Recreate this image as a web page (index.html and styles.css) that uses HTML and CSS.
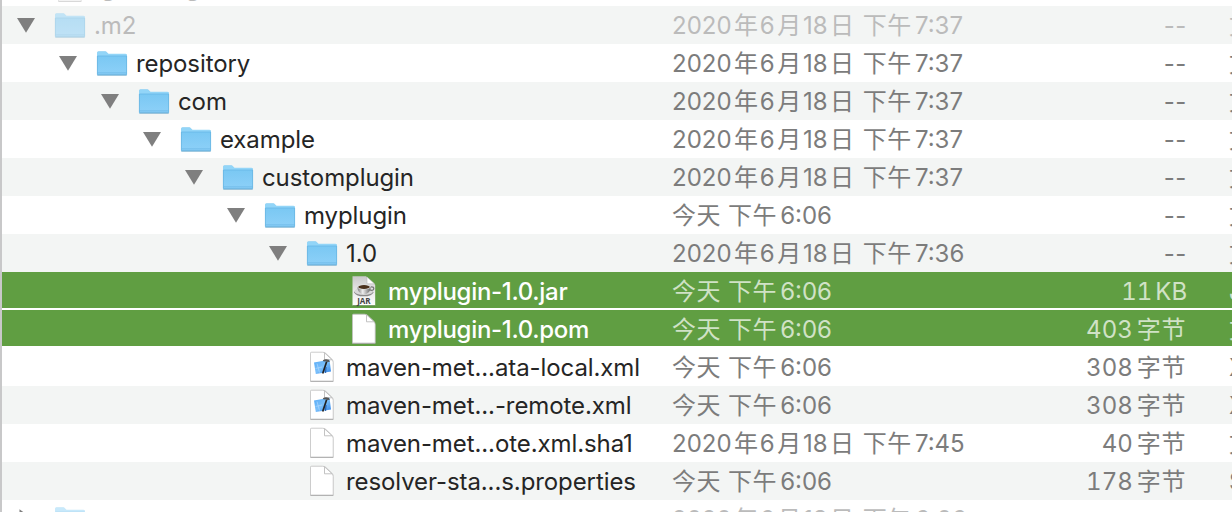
FILE: index.html
```html
<!DOCTYPE html>
<html lang="zh-CN">
<head>
<meta charset="utf-8">
<title>.m2</title>
<link rel="stylesheet" href="styles.css">
</head>
<body>
<svg class="defs" aria-hidden="true">
  <defs>
    <linearGradient id="gFolder" x1="0" y1="0" x2="0" y2="1"><stop offset="0" stop-color="#7ac8f3"/><stop offset="1" stop-color="#8dd0f8"/></linearGradient>
    <linearGradient id="gJar" x1="0" y1="0" x2="0" y2="1"><stop offset="0" stop-color="#c9c9c9"/><stop offset=".6" stop-color="#ededed"/><stop offset="1" stop-color="#fff"/></linearGradient>
    <linearGradient id="gBlue" x1="0" y1="0" x2="1" y2="1"><stop offset="0" stop-color="#55aaf6"/><stop offset=".5" stop-color="#7bc0fb"/><stop offset="1" stop-color="#2e83e8"/></linearGradient>
    <linearGradient id="gCup" x1="0" y1="0" x2="1" y2="0"><stop offset="0" stop-color="#777"/><stop offset=".4" stop-color="#eee"/><stop offset="1" stop-color="#666"/></linearGradient>
    <symbol id="folder" viewBox="0 0 32 28">
      <path d="M1 25V3.2Q1 1.5 2.5 1.5H9.2Q10.200 1.500 10.900 2.400L12.400 4H29.500Q31 4 31 5.500V25Q31 26 30 26H2Q1 26 1 25Z" fill="#5c9fc5" opacity=".45"/>
      <path d="M1 24V3Q1 1.300 2.500 1.300H9.200Q10.200 1.300 10.900 2.200L12.400 3.800H29.500Q31 3.800 31 5.300V24Q31 25 30 25H2Q1 25 1 24Z" fill="#92d5f8"/>
      <path d="M1 6H31V24Q31 25 30 25H2Q1 25 1 24Z" fill="url(#gFolder)"/>
      <path d="M1.500 6H30.500" stroke="#67b7e6" stroke-width=".8"/>
      <path d="M1.500 22.900H30.500" stroke="#67b5e3" stroke-width=".7"/>
      <path d="M1.400 6V24.500M30.600 6V24.500" stroke="#66b3df" stroke-width=".7"/>
      <path d="M1.500 24.800H30.500" stroke="#62a9d3" stroke-width=".8"/>
    </symbol>
    <symbol id="doc" viewBox="0 0 26 32">
      <path d="M1.700 1.400H16.200L24.300 9.400V31H1.700Z" fill="#777" opacity=".35"/>
      <path d="M2.500 1.200H13.500Q15.500 1.200 17 2.700L22.700 8.200Q24.200 9.700 24.200 11.500V30.200H1.500V2.200Q1.500 1.200 2.500 1.200Z" fill="#fff" stroke="#c2c2c2" stroke-width=".8"/>
      <path d="M15.500 1.800V8.800H23.200Z" fill="#fff" stroke="#bcbcbc" stroke-width=".9"/>
      <path d="M1.500 30.400H24.200" stroke="#a8a8a8" stroke-width=".8"/>
    </symbol>
    <symbol id="xml" viewBox="0 0 26 32">
      <use href="#doc" width="26" height="32"/>
      <path d="M5 11.500L20.500 8.700L22 20.500L6.800 23Z" fill="url(#gBlue)"/>
      <path d="M8 12.500L10.500 21.500M6.500 17.500L13 16" stroke="#b8defd" stroke-width=".6"/>
      <path d="M13.700 22.600L17.700 10.500" stroke="#222" stroke-width="1.700" fill="none"/>
      <path d="M13.800 9.300Q16.500 7.300 19.800 8.800L20.900 10.800L18.500 11L17.500 10.200L14.700 10.400Z" fill="#555"/>
      <path d="M17 16L16.600 22" stroke="#174d98" stroke-width=".9"/>
    </symbol>
    <symbol id="jar" viewBox="0 0 26 32">
      <path d="M1.500 1.200H15L24.200 9.800V30.700H1.500Z" fill="url(#gJar)"/>
      <path d="M1.500 30.700H24.200" stroke="#47762f" stroke-width=".8"/>
      <path d="M16 2V8.800H23.500Z" fill="#fff" stroke="#bbb" stroke-width=".6"/>
      <ellipse cx="12.800" cy="17.300" rx="9.500" ry="4" fill="#888"/>
      <ellipse cx="12.800" cy="16.400" rx="9.200" ry="3.600" fill="#d8d8d8"/>
      <ellipse cx="20.600" cy="13.600" rx="2.200" ry="1.800" fill="none" stroke="#777" stroke-width="1.200"/>
      <path d="M6.300 12Q7 19.300 13 19.300Q19 19.300 19.800 12Z" fill="url(#gCup)"/>
      <ellipse cx="13" cy="11.800" rx="6.900" ry="2.700" fill="#ddd"/>
      <ellipse cx="13" cy="12" rx="5.700" ry="1.900" fill="#4b321d"/>
      <text x="12.900" y="29.400" text-anchor="middle" class="jar-label">JAR</text>
    </symbol>
  </defs>
</svg>
<main class="list" id="list"></main>
<script src="list.js"></script>
</body>
</html>
```

FILE: list.js
```js
const JUNE = '2020年6月18日 下午';
const TODAY = '今天 下午';
const rows = [
  { level: 0, icon: 'doc', name: '.gitconfig', date: '', size: '', type: '', dim: true },
  { level: 0, icon: 'folder', open: true, name: '.m2', date: JUNE + '7:37', size: '--', type: '文件夹', dim: true },
  { level: 1, icon: 'folder', open: true, name: 'repository', date: JUNE + '7:37', size: '--', type: '文件夹' },
  { level: 2, icon: 'folder', open: true, name: 'com', date: JUNE + '7:37', size: '--', type: '文件夹' },
  { level: 3, icon: 'folder', open: true, name: 'example', date: JUNE + '7:37', size: '--', type: '文件夹' },
  { level: 4, icon: 'folder', open: true, name: 'customplugin', date: JUNE + '7:37', size: '--', type: '文件夹' },
  { level: 5, icon: 'folder', open: true, name: 'myplugin', date: TODAY + '6:06', size: '--', type: '文件夹' },
  { level: 6, icon: 'folder', open: true, name: '1.0', date: JUNE + '7:36', size: '--', type: '文件夹' },
  { level: 7, icon: 'jar', name: 'myplugin-1.0.jar', date: TODAY + '6:06', size: '11 KB', type: 'Java', selected: true },
  { level: 7, icon: 'doc', name: 'myplugin-1.0.pom', date: TODAY + '6:06', size: '403字节', type: '文稿', selected: true },
  { level: 6, icon: 'xml', name: 'maven-met...ata-local.xml', date: TODAY + '6:06', size: '308字节', type: 'XML' },
  { level: 6, icon: 'xml', name: 'maven-met...-remote.xml', date: TODAY + '6:06', size: '308字节', type: 'XML' },
  { level: 6, icon: 'doc', name: 'maven-met...ote.xml.sha1', date: JUNE + '7:45', size: '40字节', type: '文稿' },
  { level: 6, icon: 'doc', name: 'resolver-sta...s.properties', date: TODAY + '6:06', size: '178字节', type: 'S' },
  { level: 0, icon: 'folder', open: false, name: '.npm', date: JUNE + '6:06', size: '--', type: '文件夹', dim: true },
];

// Chinese runs get their own span so they can carry side gaps.
const mixed = s => s
  .replace(/[\u4e00-\u9fff]+/g, '<span class="han">$&</span>')
  .replace('11 KB', '11<span class="unit">KB</span>')
  .replace('--', '<span class="dash">--</span>');

document.getElementById('list').innerHTML = rows.map(r => {
  const cls = ['row', r.dim && 'dim', r.selected && 'selected'].filter(Boolean).join(' ');
  const arrow = r.open === undefined ? '' :
    `<svg viewBox="0 0 18 16"><path d="${r.open ? 'M0 0H18L9 14.800Z' : 'M2.500 -2.800L17 8L2.500 18.800Z'}"/></svg>`;
  return `<div class="${cls}">
    <div class="name level-${r.level}"><span class="arrow">${arrow}</span><span class="icon"><svg class="${r.icon}"><use href="#${r.icon}"/></svg></span><span class="label">${r.name}</span></div>
    <div class="date">${mixed(r.date)}</div>
    <div class="size">${mixed(r.size)}</div>
    <div class="type">${mixed(r.type)}</div>
  </div>`;
}).join('');
```

FILE: styles.css
```css
html, body { margin: 0; height: 100%; overflow: hidden; background: #fff; }
body { font: 24px/40px Inter, "Noto Sans CJK SC", sans-serif; color: #252525; }
.defs { position: absolute; width: 0; height: 0; }
.list { height: 512px; overflow: hidden; border-left: 2px solid #c8c8c9; box-sizing: border-box; }
.row { display: grid; grid-template-columns: 670px 400px 115px 41px 120px; grid-template-rows: 40px; height: 38px; box-sizing: border-box; overflow: hidden; white-space: nowrap; }
.row:first-child { margin-top: -32px; }
.row:nth-child(even) { background: #f3f5f4; }
.row.selected { background: #609e42; border-bottom: 2px solid #fff; color: #fff; }
.name { display: flex; align-items: center; height: 40px; }
.arrow { width: 18px; margin-left: 15px; flex: none; display: flex; align-items: center; }
.arrow svg { width: 18px; height: 16px; fill: #7f7f7f; overflow: visible; }
.icon { width: 32px; margin: 0 8px 0 19px; flex: none; display: flex; align-items: center; justify-content: center; }
.icon svg { display: block; }
.folder { width: 32px; height: 28px; }
.doc, .xml, .jar { width: 26px; height: 32px; margin-bottom: 2px; }
.level-1 { padding-left: 42px; }
.level-2 { padding-left: 84px; }
.level-3 { padding-left: 126px; }
.level-4 { padding-left: 168px; }
.level-5 { padding-left: 210px; }
.level-6 { padding-left: 252px; }
.level-7 { padding-left: 294px; }
.label { letter-spacing: -.09px; }
.selected .label { font-weight: 500; letter-spacing: -.3px; }
.date, .size, .type { color: #7c7c7c; }
.size { grid-column: 3; text-align: right; font-variant-numeric: tabular-nums; }
.type { grid-column: 5; padding-left: 1px; }
.selected .date, .selected .size, .selected .type { color: #d0e2c6; }
.dim .label, .dim .date, .dim .size, .dim .type { color: #bbb; }
.dim .icon { opacity: .5; }
.han { font-family: "Noto Sans CJK SC", sans-serif; line-height: 0; letter-spacing: .6px; margin: 0 1.3px 0 2.4px; }
.date .han:first-child:nth-last-child(2), .type .han { margin-left: 0; margin-right: 0; }
.date .han:last-child { margin-left: 0; margin-right: 3px; }
.size .han { margin: 0 1px 0 4px; }
.unit { margin-left: 3px; letter-spacing: -.1px; }
.dash { font-variant-numeric: normal; font-feature-settings: "tnum" 0; letter-spacing: .6px; }
.jar-label { font: 700 8px "Open Sans", sans-serif; fill: #444; }
```
